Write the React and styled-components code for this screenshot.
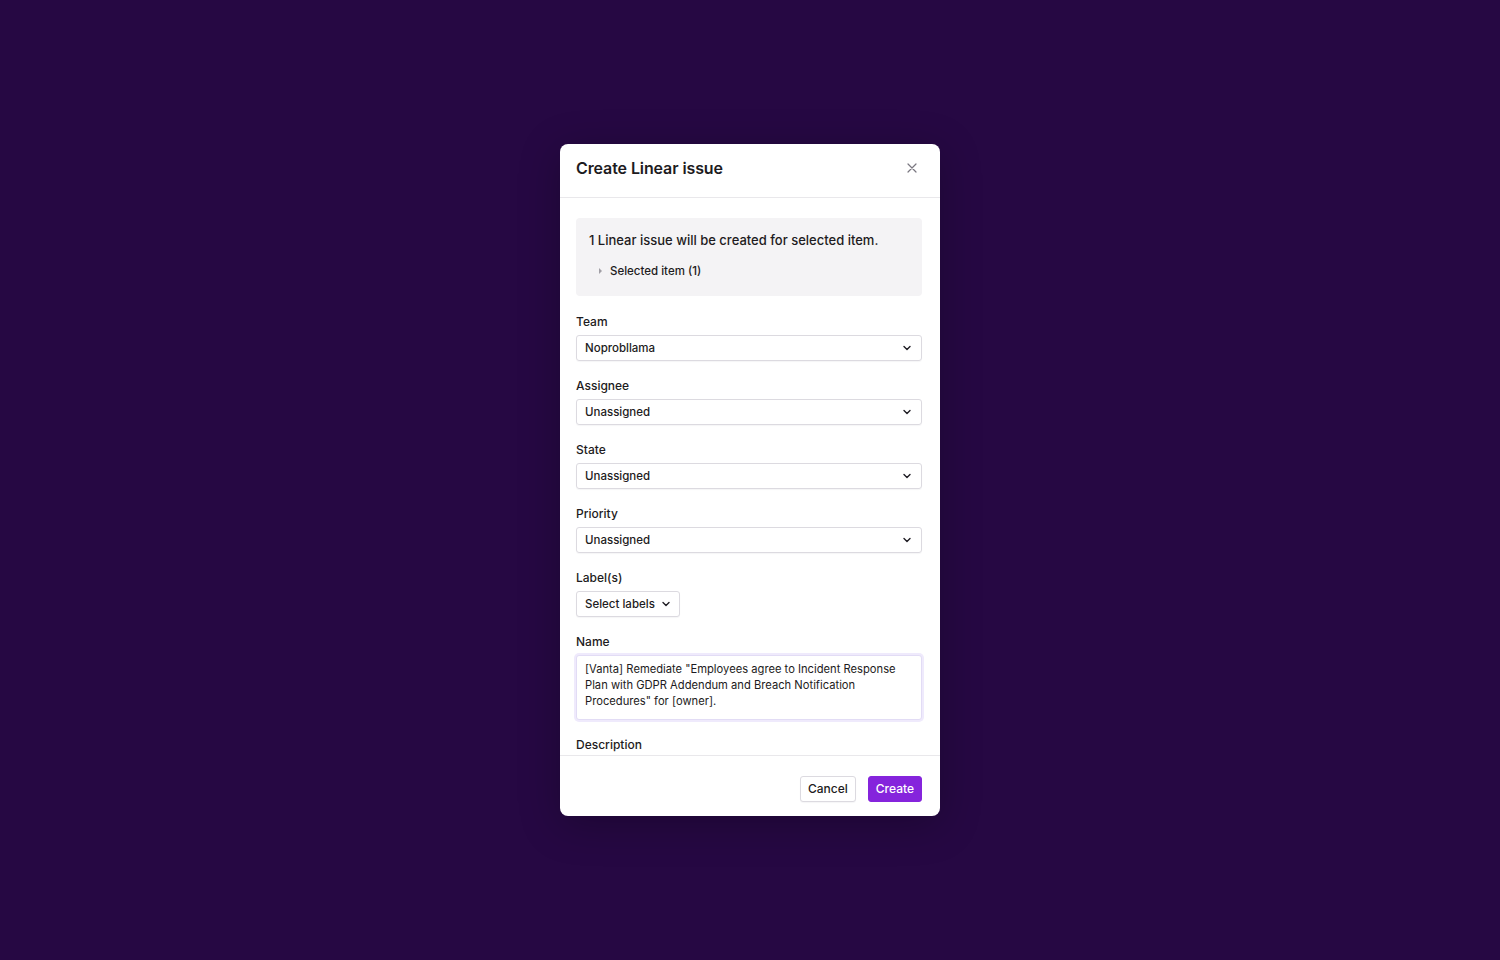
import React, { useState } from "react";
import styled, { createGlobalStyle } from "styled-components";

const GlobalStyle = createGlobalStyle`
  html, body {
    margin: 0;
    padding: 0;
    background: #260843;
  }
  body {
    font-family: Inter, "Noto Sans", sans-serif;
    -webkit-font-smoothing: antialiased;
  }
`;

const fields = [
  { label: "Team", value: "Noprobllama" },
  { label: "Assignee", value: "Unassigned" },
  { label: "State", value: "Unassigned" },
  { label: "Priority", value: "Unassigned" },
];

function Chevron({ size = 10 }) {
  return (
    <svg width={size} height={size} viewBox="0 0 10 10" fill="none">
      <path
        d="M2 3.5L5 6.5L8 3.5"
        stroke="#1f1d24"
        strokeWidth="1.4"
        strokeLinecap="round"
        strokeLinejoin="round"
      />
    </svg>
  );
}

export default function App() {
  const [name, setName] = useState(
    '[Vanta] Remediate "Employees agree to Incident Response Plan with GDPR Addendum and Breach Notification Procedures" for [owner].'
  );

  return (
    <>
      <GlobalStyle />
      <Page>
        <Modal>
          <Header>
            <Title>Create Linear issue</Title>
            <CloseButton aria-label="Close">
              <svg width="10" height="10" viewBox="0 0 10 10">
                <path
                  d="M1 1L9 9M9 1L1 9"
                  stroke="#7a7780"
                  strokeWidth="1.2"
                  strokeLinecap="round"
                />
              </svg>
            </CloseButton>
          </Header>

          <Body>
            <InfoBox>
              <InfoText>1 Linear issue will be created for selected item.</InfoText>
              <Disclosure>
                <Caret />
                Selected item (1)
              </Disclosure>
            </InfoBox>

            {fields.map((f) => (
              <Field key={f.label}>
                <Label>{f.label}</Label>
                <Select>
                  <span>{f.value}</span>
                  <Chevron />
                </Select>
              </Field>
            ))}

            <Field>
              <Label>Label(s)</Label>
              <LabelsButton>
                Select labels
                <Chevron />
              </LabelsButton>
            </Field>

            <Field>
              <Label>Name</Label>
              <NameInput
                value={name}
                onChange={(e) => setName(e.target.value)}
                rows={3}
              />
            </Field>

            <Field>
              <Label>Description</Label>
            </Field>
          </Body>

          <Footer>
            <CancelButton>Cancel</CancelButton>
            <CreateButton>Create</CreateButton>
          </Footer>
        </Modal>
      </Page>
    </>
  );
}

const Page = styled.div`
  width: 1500px;
  height: 960px;
  display: flex;
  justify-content: center;
  padding-top: 144px;
  box-sizing: border-box;
  background: #260843;
`;

const Modal = styled.div`
  width: 380px;
  height: 672px;
  background: #fff;
  border-radius: 8px;
  display: flex;
  flex-direction: column;
  overflow: hidden;
  box-shadow: 0 8px 40px rgba(0, 0, 0, 0.25);
`;

const Header = styled.div`
  height: 54px;
  flex-shrink: 0;
  display: flex;
  align-items: center;
  justify-content: space-between;
  padding: 0 19px 5px 16px;
  border-bottom: 1px solid #e9e8eb;
  box-sizing: border-box;
`;

const Title = styled.h2`
  margin: 0;
  font: 600 16px/20px Inter, sans-serif;
  color: #1d1b21;
  letter-spacing: -0.1px;
`;

const CloseButton = styled.button`
  border: none;
  background: none;
  padding: 4px;
  display: flex;
  cursor: pointer;
`;

const Body = styled.div`
  flex: 1;
  overflow: hidden;
  padding: 20px 18px 0 16px;
  display: flex;
  flex-direction: column;
  gap: 18px;
`;

const InfoBox = styled.div`
  background: #f4f3f5;
  border-radius: 4px;
  padding: 14px 13px 18px;
  margin-bottom: 1px;
  display: flex;
  flex-direction: column;
  gap: 15px;
`;

const InfoText = styled.div`
  font: 500 13px/17px Inter, sans-serif;
  color: #1d1b21;
`;

const Disclosure = styled.div`
  display: flex;
  align-items: center;
  gap: 8px;
  padding-left: 10px;
  font: 500 11.5px/14px Inter, sans-serif;
  color: #1d1b21;
`;

const Caret = styled.span`
  width: 0;
  height: 0;
  border-top: 3px solid transparent;
  border-bottom: 3px solid transparent;
  border-left: 3px solid #a19fa6;
`;

const Field = styled.div`
  display: flex;
  flex-direction: column;
  align-items: flex-start;
  gap: 6px;
`;

const Label = styled.div`
  font: 500 12px/14px Inter, sans-serif;
  color: #1d1b21;
`;

const Select = styled.div`
  width: 100%;
  height: 26px;
  box-sizing: border-box;
  border: 1px solid #dcdae0;
  border-radius: 3px;
  padding: 0 9px 0 8px;
  display: flex;
  align-items: center;
  justify-content: space-between;
  font: 500 11.5px/14px Inter, sans-serif;
  color: #1d1b21;
  box-shadow: 0 1px 1px rgba(20, 10, 40, 0.04);
`;

const LabelsButton = styled.button`
  height: 26px;
  box-sizing: border-box;
  border: 1px solid #dcdae0;
  border-radius: 3px;
  background: #fff;
  padding: 0 8px;
  display: flex;
  align-items: center;
  gap: 6px;
  font: 500 11.5px/14px Inter, sans-serif;
  color: #1d1b21;
  box-shadow: 0 1px 1px rgba(20, 10, 40, 0.04);
`;

const NameInput = styled.textarea`
  width: 100%;
  height: 65px;
  box-sizing: border-box;
  border: 1px solid #e2dcf5;
  box-shadow: 0 0 0 2px #efeafc;
  border-radius: 3px;
  padding: 5px 8px;
  resize: none;
  outline: none;
  font: 400 11.2px/16px Inter, sans-serif;
  color: #1d1b21;
`;

const Footer = styled.div`
  height: 61px;
  flex-shrink: 0;
  border-top: 1px solid #e9e8eb;
  display: flex;
  align-items: center;
  justify-content: flex-end;
  gap: 12px;
  padding: 5px 18px 0 16px;
  box-sizing: border-box;
`;

const BaseButton = styled.button`
  height: 26px;
  box-sizing: border-box;
  border-radius: 3px;
  padding: 0 7px;
  font: 500 12px/14px Inter, sans-serif;
  cursor: pointer;
`;

const CancelButton = styled(BaseButton)`
  background: #fff;
  border: 1px solid #dcdae0;
  color: #1d1b21;
  box-shadow: 0 1px 1px rgba(20, 10, 40, 0.04);
`;

const CreateButton = styled(BaseButton)`
  background: #8524dc;
  border: 1px solid #8524dc;
  color: #fff;
`;
